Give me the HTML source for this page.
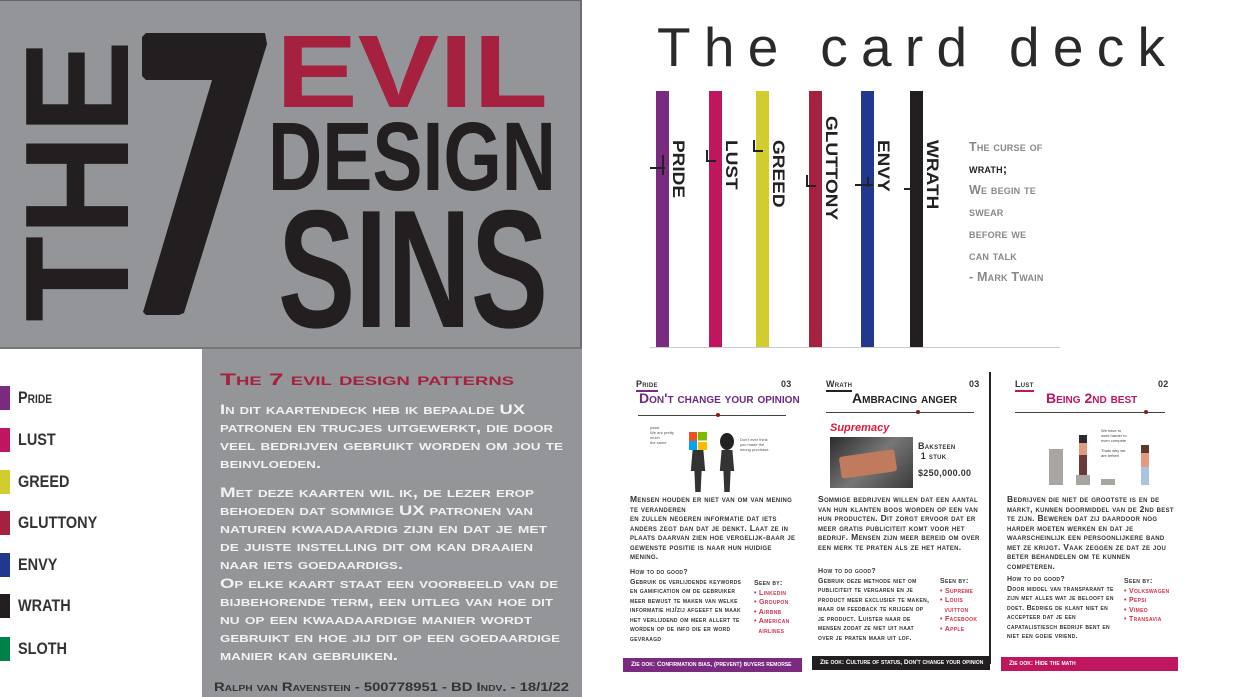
<!DOCTYPE html>
<html><head><meta charset="utf-8"><style>
*{margin:0;padding:0;box-sizing:border-box}
body{width:1245px;height:697px;overflow:hidden;background:#fff;position:relative;font-family:"Liberation Sans",sans-serif}
.a{position:absolute}
.cond{font-family:"Liberation Sans Narrow","Liberation Sans",sans-serif;font-weight:bold}
.sc{font-variant:small-caps;font-weight:bold}
.bar{position:absolute;width:13px}
.vt{position:absolute;writing-mode:vertical-rl;font-weight:bold;font-size:19px;color:#222;line-height:19px;transform:scaleX(.85)}
.leg{position:absolute;left:0;width:10px;height:24px}
.lt{position:absolute;left:18px;font-size:17px;color:#333;transform:scaleX(.85);transform-origin:left}
.card{position:absolute;font-size:8px;line-height:12px}
.card .t{font-variant:small-caps;font-weight:bold;letter-spacing:.3px;color:#333}
.gr{color:#999}
.red{color:#d3304d}
svg text{font-family:"Liberation Sans",sans-serif;font-weight:bold}
</style></head><body>

<div class="a" style="left:0;top:0;width:582px;height:349px;background:#939598;border-top:1px solid #666;border-right:2px solid #6d6e71;border-bottom:2px solid #777"></div>
<svg class="a" style="left:0;top:0" width="582" height="349">
 <text transform="rotate(-90)" x="-322" y="128" font-size="148" textLength="282" lengthAdjust="spacingAndGlyphs" fill="#231f20">THE</text>
 <polygon points="146,33 265,33 267,44 184,313 179,315 146,315 143,312 212,80 146,80 142,76 142,37" fill="#231f20"/>
 <text x="276" y="107" font-size="103" textLength="272" lengthAdjust="spacingAndGlyphs" fill="#a6213f">EVIL</text>
 <text x="268" y="190" font-size="97" textLength="288" lengthAdjust="spacingAndGlyphs" fill="#231f20">DESIGN</text>
 <text x="278" y="327" font-size="168" textLength="270" lengthAdjust="spacingAndGlyphs" fill="#231f20">SINS</text>
</svg>

<div class="leg" style="top:386px;background:#7a2a7f"></div><div class="lt sc" style="top:388px">Pride</div>
<div class="leg" style="top:428px;background:#c0155f"></div><div class="lt sc" style="top:430px">LUST</div>
<div class="leg" style="top:470px;background:#d2cd2e"></div><div class="lt sc" style="top:472px">GREED</div>
<div class="leg" style="top:511px;background:#a6213f"></div><div class="lt sc" style="top:513px">GLUTTONY</div>
<div class="leg" style="top:553px;background:#24378f"></div><div class="lt sc" style="top:555px">ENVY</div>
<div class="leg" style="top:594px;background:#231f20"></div><div class="lt sc" style="top:596px">WRATH</div>
<div class="leg" style="top:637px;background:#00804a"></div><div class="lt sc" style="top:639px">SLOTH</div>

<div class="a" style="left:202px;top:349px;width:380px;height:348px;background:#939598"></div>
<svg class="a" style="left:0;top:0" width="590" height="697">
 <g style="font-variant:small-caps">
 <text x="220" y="385" font-size="17" textLength="294" lengthAdjust="spacingAndGlyphs" fill="#a6213f">The 7 evil design patterns</text>
 <g fill="#f2f2f2" font-size="14">
 <text x="220" y="414" textLength="305" lengthAdjust="spacingAndGlyphs">In dit kaartendeck heb ik bepaalde UX</text>
 <text x="220" y="432" textLength="333" lengthAdjust="spacingAndGlyphs">patronen en trucjes uitgewerkt, die door</text>
 <text x="220" y="450" textLength="343" lengthAdjust="spacingAndGlyphs">veel bedrijven gebruikt worden om jou te</text>
 <text x="220" y="468" textLength="101" lengthAdjust="spacingAndGlyphs">beinvloeden.</text>
 <text x="220" y="497" textLength="314" lengthAdjust="spacingAndGlyphs">Met deze kaarten wil ik, de lezer erop</text>
 <text x="220" y="515" textLength="313" lengthAdjust="spacingAndGlyphs">behoeden dat sommige UX patronen van</text>
 <text x="220" y="533" textLength="327" lengthAdjust="spacingAndGlyphs">naturen kwaadaardig zijn en dat je met</text>
 <text x="220" y="551" textLength="313" lengthAdjust="spacingAndGlyphs">de juiste instelling dit om kan draaien</text>
 <text x="220" y="569" textLength="183" lengthAdjust="spacingAndGlyphs">naar iets goedaardigs.</text>
 <text x="220" y="588" textLength="338" lengthAdjust="spacingAndGlyphs">Op elke kaart staat een voorbeeld van de</text>
 <text x="220" y="606" textLength="333" lengthAdjust="spacingAndGlyphs">bijbehorende term, een uitleg van hoe dit</text>
 <text x="220" y="624" textLength="312" lengthAdjust="spacingAndGlyphs">nu op een kwaadaardige manier wordt</text>
 <text x="220" y="642" textLength="340" lengthAdjust="spacingAndGlyphs">gebruikt en hoe jij dit op een goedaardige</text>
 <text x="220" y="660" textLength="178" lengthAdjust="spacingAndGlyphs">manier kan gebruiken.</text>
 </g>
 <text x="214" y="691" font-size="11.5" textLength="355" lengthAdjust="spacingAndGlyphs" fill="#333">Ralph van Ravenstein - 500778951 - BD Indv. - 18/1/22</text>
 </g>
</svg>

<svg class="a" style="left:640px;top:0" width="560" height="80">
 <text x="17" y="66" font-size="55" textLength="508" lengthAdjust="spacing" fill="#2a2a2a" style="font-weight:normal">The card deck</text>
</svg>

<div class="bar" style="left:656px;top:91px;height:256px;background:#7a2a7f"></div>
<div class="bar" style="left:709px;top:91px;height:256px;background:#c0155f"></div>
<div class="bar" style="left:756px;top:91px;height:257px;background:#d2cd2e"></div>
<div class="bar" style="left:809px;top:91px;height:256px;background:#a6213f"></div>
<div class="bar" style="left:861px;top:91px;height:256px;background:#24378f"></div>
<div class="bar" style="left:910px;top:91px;height:257px;background:#231f20"></div>
<div class="a" style="left:650px;top:347px;width:410px;height:1px;background:#ccc"></div>
<div class="vt" style="left:668px;top:140px">PRIDE</div>
<div class="vt" style="left:721px;top:140px">LUST</div>
<div class="vt" style="left:768px;top:140px">GREED</div>
<div class="vt" style="left:821px;top:116px">GLUTTONY</div>
<div class="vt" style="left:873px;top:140px">ENVY</div>
<div class="vt" style="left:922px;top:140px">WRATH</div>
<div class="a" style="left:650px;top:167px;width:15px;height:2px;background:#222"></div><div class="a" style="left:662px;top:155px;width:2px;height:20px;background:#222"></div>
<div class="a" style="left:706px;top:150px;width:2px;height:12px;background:#222"></div><div class="a" style="left:706px;top:160px;width:10px;height:2px;background:#222"></div>
<div class="a" style="left:753px;top:140px;width:2px;height:12px;background:#222"></div><div class="a" style="left:753px;top:150px;width:10px;height:2px;background:#222"></div>
<div class="a" style="left:806px;top:175px;width:2px;height:12px;background:#222"></div><div class="a" style="left:806px;top:185px;width:10px;height:2px;background:#222"></div>
<div class="a" style="left:855px;top:184px;width:18px;height:2px;background:#222"></div><div class="a" style="left:867px;top:177px;width:2px;height:10px;background:#222"></div>
<div class="a" style="left:904px;top:188px;width:10px;height:2px;background:#222"></div>
<div class="a sc" style="left:969px;top:137px;font-size:12.5px;line-height:21.7px;color:#888;letter-spacing:.2px">The curse of<br><span style="color:#222">wrath;</span><br>We begin te<br>swear<br>before we<br>can talk<br>- Mark Twain</div>

<div class="card" style="left:622px;top:375px;width:180px;height:298px">
 <div class="a t" style="left:14px;top:3px;font-size:9px;border-bottom:2px solid #7a2a7f">Pride</div>
 <div class="a t" style="left:159px;top:3px;font-size:9px">03</div>
 <div class="a cond" style="left:17px;top:17px;font-size:14px;color:#6c2a86;white-space:nowrap;font-variant:small-caps">Don't change your opinion</div>
 <div class="a" style="left:16px;top:40px;width:148px;height:1px;background:#444"></div>
 <div class="a" style="left:94px;top:38px;width:4px;height:4px;background:#8b1a1a;border-radius:2px"></div>
 <div class="a" style="left:67px;top:57px;width:18px;height:18px;background:linear-gradient(90deg,transparent 8px,#fff 8px,#fff 10px,transparent 10px),linear-gradient(#f25022 0 50%,#00a4ef 50%)"></div>
 <div class="a" style="left:76px;top:57px;width:9px;height:18px;background:linear-gradient(#7fba00 0 48%,#fff 48% 56%,#ffb900 56%)"></div>
 <div class="a" style="left:67px;top:75px;width:18px;height:42px;background:#333;clip-path:polygon(20% 0,80% 0,90% 50%,70% 50%,65% 100%,35% 100%,30% 50%,10% 50%)"></div>
 <div class="a" style="left:98px;top:58px;width:14px;height:17px;background:#222;border-radius:50%"></div>
 <div class="a" style="left:96px;top:75px;width:18px;height:42px;background:#333;clip-path:polygon(20% 0,80% 0,90% 50%,70% 50%,65% 100%,35% 100%,30% 50%,10% 50%)"></div>
 <div class="a" style="left:28px;top:50px;font-size:4px;line-height:5px;color:#555">pssst<br>We are pretty<br>much<br>the same</div>
 <div class="a" style="left:118px;top:62px;font-size:4px;line-height:5px;color:#555">Don't ever think<br>you made the<br>wrong purchase.</div>
 <div class="a t" style="left:8px;top:120px;width:170px;font-size:8.5px;line-height:9.5px">Mensen houden er niet van om van mening te veranderen<br>en zullen negeren informatie dat iets anders zegt dan dat je denkt. Laat ze in plaats daarvan zien hoe vergelijk-baar je gewenste positie is naar hun huidige mening.</div>
 <div class="a t gr" style="left:8px;top:193px;width:120px;font-size:7px;line-height:9.5px">How to do good?<br>Gebruik de verlijdende keywords en gamification om de gebruiker meer bewust te maken van welke informatie hij/zij afgeeft en maak het verlijdend om meer allert te worden op de info die er word gevraagd</div>
 <div class="a t" style="left:132px;top:204px;font-size:7px;line-height:9.5px">Seen by:<br><span class="red">• Linkedin<br>• Groupon<br>• Airbnb<br>• American<br>&nbsp; airlines</span></div>
 <div class="a" style="left:1px;top:283px;width:179px;height:14px;background:#7a2a7f;color:#fff;font-size:6.5px;line-height:14px;padding-left:8px;font-variant:small-caps;font-weight:bold;white-space:nowrap">Zie ook: Confirmation bias, (prevent) buyers remorse</div>
</div>

<div class="card" style="left:812px;top:375px;width:178px;height:298px">
 <div class="a t" style="left:14px;top:3px;font-size:9px;border-bottom:2px solid #222">Wrath</div>
 <div class="a t" style="left:157px;top:3px;font-size:9px">03</div>
 <div class="a cond" style="left:40px;top:17px;font-size:14px;color:#222;white-space:nowrap;font-variant:small-caps">Ambracing anger</div>
 <div class="a" style="left:14px;top:37px;width:148px;height:1px;background:#444"></div>
 <div class="a" style="left:104px;top:35px;width:4px;height:4px;background:#8b1a1a;border-radius:2px"></div>
 <div class="a" style="left:18px;top:47px;font-size:11px;font-style:italic;font-weight:bold;color:#e8173a">Supremacy</div>
 <div class="a" style="left:18px;top:62px;width:83px;height:51px;background:linear-gradient(135deg,#2b2b2b,#777 50%,#3a3a3a)"></div>
 <div class="a" style="left:28px;top:78px;width:56px;height:22px;background:#c07a5e;transform:rotate(-8deg);border-radius:3px"></div>
 <div class="a t" style="left:106px;top:66px;font-size:9px;line-height:10px">Baksteen<br>&nbsp;1 stuk</div>
 <div class="a t" style="left:106px;top:92px;font-size:9px">$250,000.00</div>
 <div class="a t" style="left:6px;top:120px;width:172px;font-size:8.5px;line-height:9.5px">Sommige bedrijven willen dat een aantal van hun klanten boos worden op een van hun producten. Dit zorgt ervoor dat er meer gratis publiciteit komt voor het bedrijf. Mensen zijn meer bereid om over een merk te praten als ze het haten.</div>
 <div class="a t gr" style="left:6px;top:192px;width:112px;font-size:7px;line-height:9.5px">How to do good?<br>Gebruik deze methode niet om publiciteit te vergaren en je product meer exclusief te maken, maar om feedback te krijgen op je product. Luister naar de mensen zodat ze niet uit haat over je praten maar uit lof.</div>
 <div class="a t" style="left:128px;top:202px;font-size:7px;line-height:9.5px">Seen by:<br><span class="red">• Supreme<br>• Louis<br>&nbsp; vuitton<br>• Facebook<br>• Apple</span></div>
 <div class="a" style="left:0;top:281px;width:178px;height:14px;background:#231f20;color:#fff;font-size:6.5px;line-height:14px;padding-left:8px;font-variant:small-caps;font-weight:bold;white-space:nowrap">Zie ook: Culture of status, Don't change your opinion</div>
</div>
<div class="a" style="left:989px;top:372px;width:2px;height:292px;background:#222"></div>

<div class="card" style="left:1001px;top:375px;width:178px;height:298px">
 <div class="a t" style="left:14px;top:3px;font-size:9px;border-bottom:2px solid #c0155f">Lust</div>
 <div class="a t" style="left:157px;top:3px;font-size:9px">02</div>
 <div class="a cond" style="left:45px;top:17px;font-size:14px;color:#c0155f;white-space:nowrap;font-variant:small-caps">Being 2nd best</div>
 <div class="a" style="left:14px;top:37px;width:150px;height:1px;background:#444"></div>
 <div class="a" style="left:143px;top:35px;width:4px;height:4px;background:#8b1a1a;border-radius:2px"></div>
 <div class="a" style="left:48px;top:74px;width:14px;height:36px;background:#a9a6a2"></div>
 <div class="a" style="left:75px;top:100px;width:14px;height:10px;background:#a9a6a2"></div>
 <div class="a" style="left:100px;top:104px;width:14px;height:6px;background:#a9a6a2"></div>
 <div class="a" style="left:78px;top:60px;width:8px;height:40px;background:linear-gradient(#2b2b2b 0 20%,#e29a80 20% 50%,#6a3a3a 50%)"></div>
 <div class="a" style="left:140px;top:70px;width:8px;height:40px;background:linear-gradient(#5a3a2a 0 20%,#e29a80 20% 55%,#a8c4e0 55%)"></div>
 <div class="a" style="left:100px;top:53px;font-size:4px;line-height:5px;color:#444">We have to<br>work harder to<br>even compete<br><br>Thats why we<br>are better!</div>
 <div class="a t" style="left:6px;top:120px;width:172px;font-size:8.5px;line-height:9.5px">Bedrijven die niet de grootste is en de markt, kunnen doormiddel van de 2nd best te zijn. Beweren dat zij daardoor nog harder moeten werken en dat je waarscheinlijk een persoonlijkere band met ze krijgt. Vaak zeggen ze dat ze jou beter behandelen om te kunnen competeren.</div>
 <div class="a t gr" style="left:6px;top:200px;width:112px;font-size:7px;line-height:9.5px">How to do good?<br>Door middel van transparant te zijn met alles wat je belooft en doet. Bedrieg de klant niet en accepteer dat je een capatalistiesch bedrijf bent en niet een goeie vriend.</div>
 <div class="a t" style="left:123px;top:202px;font-size:7px;line-height:9.5px">Seen by:<br><span class="red">• Volkswagen<br>• Pepsi<br>• Vimeo<br>• Transavia</span></div>
 <div class="a" style="left:0;top:282px;width:177px;height:14px;background:#c0155f;color:#fff;font-size:6.5px;line-height:14px;padding-left:8px;font-variant:small-caps;font-weight:bold;white-space:nowrap">Zie ook: Hide the math</div>
</div>
</body></html>
